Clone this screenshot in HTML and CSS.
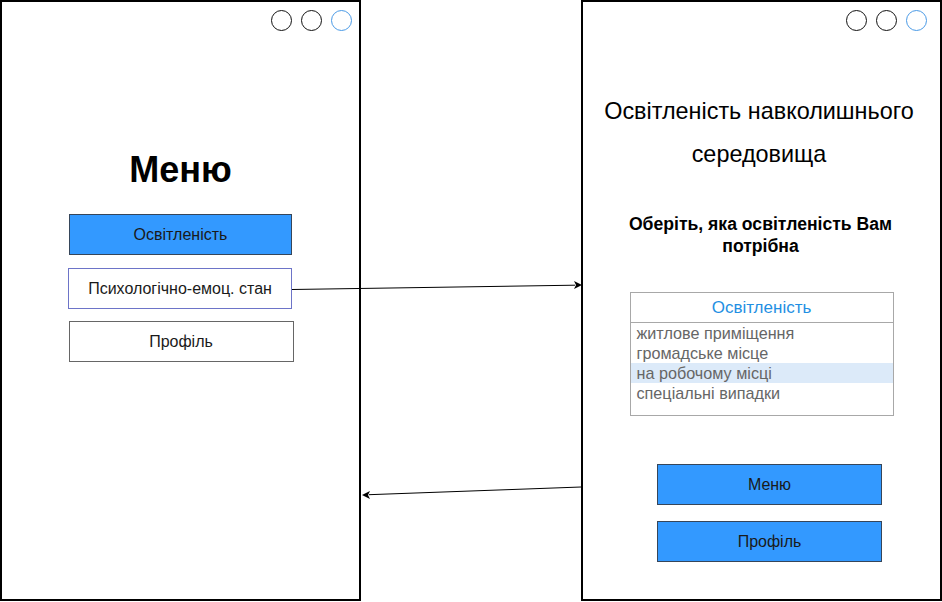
FILE: index.html
```html
<!DOCTYPE html>
<html lang="uk">
<head>
<meta charset="utf-8">
<title>Меню</title>
<link rel="stylesheet" href="styles.css">
</head>
<body>
<div class="canvas">
  <section class="frame frame-left">
    <div class="dots dots-left">
      <span class="dot"></span><span class="dot"></span><span class="dot dot-blue"></span>
    </div>
    <h1 class="menu-title">Меню</h1>
    <div class="btn btn-blue btn-first">Освітленість</div>
    <div class="btn btn-outline-blue btn-second">Психологічно-емоц. стан</div>
    <div class="btn btn-outline btn-third">Профіль</div>
  </section>

  <section class="frame frame-right">
    <div class="dots dots-right">
      <span class="dot"></span><span class="dot"></span><span class="dot dot-blue"></span>
    </div>
    <h2 class="page-title">Освітленість навколишнього<br>середовища</h2>
    <p class="subtitle">Оберіть, яка освітленість Вам<br>потрібна</p>
    <div class="listbox">
      <div class="listbox-head">Освітленість</div>
      <ul class="listbox-items">
        <li>житлове приміщення</li>
        <li>громадське місце</li>
        <li class="selected">на робочому місці</li>
        <li>спеціальні випадки</li>
      </ul>
    </div>
    <div class="btn btn-blue btn-r1">Меню</div>
    <div class="btn btn-blue btn-r2">Профіль</div>
  </section>

  <svg class="arrows" width="942" height="602" viewBox="0 0 942 602">
    <line x1="292" y1="289.5" x2="575" y2="285.2" stroke="#000" stroke-width="1"/>
    <path d="M582 285 L574 281 L576 285 L574 289 Z" fill="#000"/>
    <line x1="581" y1="487" x2="369" y2="494.7" stroke="#000" stroke-width="1"/>
    <path d="M362 495 L370 491 L368 495 L370 499 Z" fill="#000"/>
  </svg>
</div>
</body>
</html>
```

FILE: styles.css
```css
* { box-sizing: border-box; }
html, body {
  margin: 0;
  padding: 0;
  background: #fff;
}
body {
  font-family: "Liberation Sans", Arial, sans-serif;
  color: #000;
}
.canvas {
  position: relative;
  width: 942px;
  height: 602px;
  display: flex;
  gap: 220px;
  overflow: hidden;
}
.frame {
  width: 361px;
  height: 601px;
  border: 2px solid #000;
  display: flex;
  flex-direction: column;
  align-items: center;
  padding-top: 8px;
}
.dots {
  align-self: stretch;
  display: flex;
  justify-content: flex-end;
  gap: 9px;
  height: 21px;
}
.dots-left { padding-right: 7px; }
.dots-right { padding-right: 13px; }
.dot {
  width: 21px;
  height: 21px;
  border-radius: 50%;
  border: 1.3px solid #111;
}
.dot-blue { border-color: #4a9ae6; }

.menu-title {
  margin: 118px 0 0 0;
  font-size: 36px;
  line-height: 42px;
  font-weight: bold;
}
.btn {
  width: 223px;
  height: 41px;
  display: flex;
  align-items: center;
  justify-content: center;
  font-size: 16px;
  color: #1a1a1a;
  border: 1.3px solid #444;
}
.btn-blue {
  background: #3399ff;
  border-color: #36465a;
}
.btn-outline-blue {
  border-color: #6d74c8;
  background: #fff;
}
.btn-outline {
  border-color: #666;
  background: #fff;
}
.btn-first { margin-top: 23px; }
.btn-second { margin-top: 13px; width: 224px; margin-left: -1px; }
.btn-third { margin-top: 12px; margin-left: 1px; width: 225px; }

.page-title {
  margin: 59px 0 0 -5px;
  font-size: 23.4px;
  line-height: 43px;
  font-weight: normal;
  text-align: center;
}
.subtitle {
  margin: 37px 0 0 -2px;
  font-size: 17.6px;
  line-height: 22px;
  font-weight: bold;
  text-align: center;
}
.listbox {
  margin-top: 35px;
  width: 264px;
  height: 124px;
  border: 1px solid #a8a8a8;
}
.listbox-head {
  height: 30px;
  border-bottom: 1px solid #a8a8a8;
  display: flex;
  align-items: center;
  justify-content: center;
  color: #1f8fe3;
  font-size: 17px;
}
.listbox-items {
  list-style: none;
  margin: 0;
  padding: 0;
}
.listbox-items li {
  height: 20px;
  line-height: 20px;
  padding-left: 6px;
  font-size: 16.2px;
  color: #666;
}
.listbox-items li.selected {
  background: #dceaf9;
}
.btn-r1 {
  margin: 48px 0 0 16px;
  width: 225px;
  height: 41px;
}
.btn-r2 {
  margin: 16px 0 0 16px;
  width: 225px;
  height: 41px;
}
.arrows {
  position: absolute;
  left: 0;
  top: 0;
  pointer-events: none;
}
```
